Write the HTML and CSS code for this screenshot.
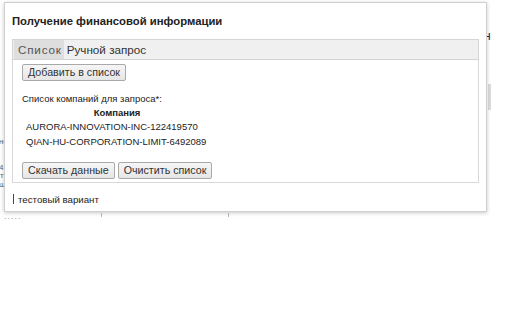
FILE: index.html
```html
<!DOCTYPE html>
<html lang="ru">
<head>
<meta charset="utf-8">
<link rel="stylesheet" href="styles.css">
</head>
<body>
<div class="page">
  <div class="bg">
    <span class="bg-frag bg-n">н</span>
    <span class="bg-scroll"></span>
    <span class="bg-frag bg-l1">не</span>
    <span class="bg-frag bg-l2">4</span>
    <span class="bg-frag bg-l3">т</span>
    <span class="bg-frag bg-l4">ш-</span>
    <span class="bg-tick bg-t1"></span>
    <span class="bg-tick bg-t2"></span>
    <span class="bg-dots">.....</span>
  </div>
  <div class="dialog">
    <div class="dlg-title">Получение финансовой информации</div>
    <div class="tabs">
      <div class="tab-bar">
        <span class="tab active">Список</span>
        <span class="tab">Ручной запрос</span>
      </div>
      <div class="tab-body">
        <button class="btn">Добавить в список</button>
        <div class="label">Список компаний для запроса*:</div>
        <div class="col-head">Компания</div>
        <div class="row">AURORA-INNOVATION-INC-122419570</div>
        <div class="row">QIAN-HU-CORPORATION-LIMIT-6492089</div>
        <div class="actions">
          <button class="btn">Скачать данные</button>
          <button class="btn">Очистить список</button>
        </div>
      </div>
    </div>
    <div class="footer"><span class="caret"></span>тестовый вариант</div>
  </div>
</div>
</body>
</html>
```
FILE: styles.css
```css
html, body {
  margin: 0;
  padding: 0;
  background: #fff;
}
body {
  font-family: "Liberation Sans", Arial, sans-serif;
  color: #222;
}
.page {
  position: relative;
  width: 512px;
  height: 320px;
  overflow: hidden;
}
.bg {
  position: absolute;
  inset: 0;
  color: #666;
  font-size: 8px;
  line-height: 8px;
}
.bg-frag {
  position: absolute;
}
.bg-n { left: 484px; top: 30px; color: #1a2a6a; font-size: 12px; line-height: 12px; }
.bg-l1 { left: -1px; top: 138px; }
.bg-l2 { left: -1px; top: 164px; }
.bg-l3 { left: 0; top: 172px; }
.bg-l4 { left: -1px; top: 181px; }
.bg-scroll {
  position: absolute;
  left: 488px;
  top: 84px;
  width: 3px;
  height: 26px;
  background: #dcdcdc;
}
.bg-tick {
  position: absolute;
  top: 213px;
  width: 1px;
  height: 4px;
  background: #bbb;
}
.bg-t1 { left: 101px; }
.bg-t2 { left: 228px; }
.bg-dots {
  position: absolute;
  left: 4px;
  top: 212px;
  color: #999;
  font-size: 9px;
  letter-spacing: 1px;
}
.dialog {
  position: absolute;
  left: 4px;
  top: 2px;
  width: 483px;
  height: 210px;
  background: #fff;
  border: 1px solid #cfcfcf;
  box-shadow: 0 1px 4px rgba(0,0,0,0.22);
  padding: 0 7px;
  box-sizing: border-box;
  display: flex;
  flex-direction: column;
}
.dlg-title {
  height: 36px;
  display: flex;
  align-items: center;
  font-weight: bold;
  font-size: 11.3px;
  color: #222;
}
.tabs {
  border: 1px solid #d8d8d8;
  border-top: none;
}
.tab-bar {
  height: 19px;
  background: #f0f0f0;
  border: 1px solid #d4d4d4;
  display: flex;
  align-items: stretch;
  margin: 0 -1px;
}
.tab {
  font-size: 11.7px;
  color: #333;
  padding: 0 0 0 3px;
  display: flex;
  align-items: center;
}
.tab.active {
  background: #dedede;
  color: #555;
  padding: 0 2px 0 4px;
  margin-left: 1px;
  letter-spacing: 0.8px;
}
.tab-body {
  height: 122px;
  box-sizing: border-box;
  padding: 4px 9px 0;
  font-size: 9.5px;
  color: #222;
}
.btn {
  font-family: inherit;
  font-size: 10.7px;
  color: #333;
  background: linear-gradient(#f6f6f6, #e6e6e6);
  border: 1px solid #a9a9a9;
  border-radius: 2px;
  height: 17px;
  padding: 0 5px;
  margin: 0;
  line-height: 15px;
}
.label {
  margin-top: 11px;
  line-height: 14px;
}
.col-head {
  font-weight: bold;
  width: 190px;
  text-align: center;
  line-height: 14px;
}
.row {
  padding-left: 4px;
  line-height: 14.5px;
}
.actions {
  margin-top: 13px;
  display: flex;
  gap: 3px;
}
.footer {
  flex: 1;
  display: flex;
  align-items: center;
  font-size: 9.7px;
  color: #222;
  padding-top: 4px;
}
.caret {
  display: inline-block;
  width: 1px;
  height: 10px;
  background: #444;
  margin-right: 4px;
  margin-left: 1px;
}
```
